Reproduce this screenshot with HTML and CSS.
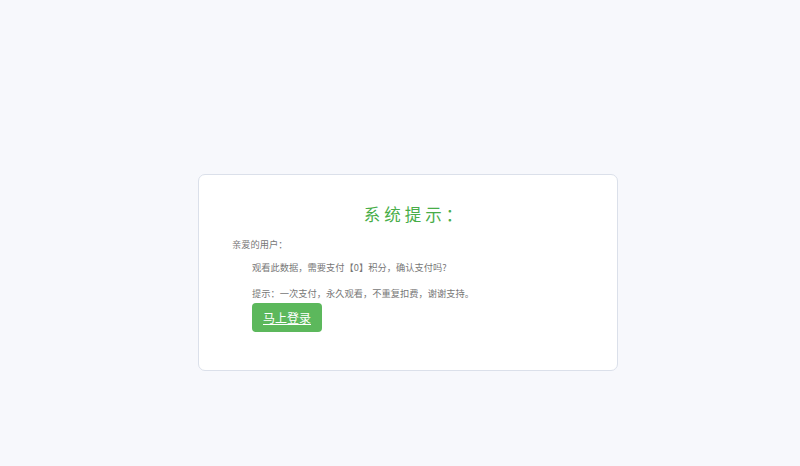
FILE: index.html
```html
<!DOCTYPE html>
<html lang="zh-CN">
<head>
<meta charset="utf-8">
<title>系统提示</title>
<link rel="stylesheet" href="styles.css">
</head>
<body>
<div class="page">
  <div class="card">
    <h1 class="title">系统提示：</h1>
    <p class="greet">亲爱的用户：</p>
    <div class="body">
      <p class="line first">观看此数据，需要支付【0】积分，确认支付吗?</p>
      <p class="line second">提示：一次支付，永久观看，不重复扣费，谢谢支持。</p>
      <a class="btn" href="#">马上登录</a>
    </div>
  </div>
</div>
</body>
</html>
```

FILE: styles.css
```css
html, body {
  margin: 0;
  padding: 0;
  background: #f7f8fc;
  font-family: "Noto Sans CJK SC", "Noto Sans", sans-serif;
}
.page {
  display: flex;
  justify-content: center;
  padding: 174px 0 0 16px;
  height: 466px;
  box-sizing: border-box;
}
.card {
  width: 420px;
  height: 197px;
  box-sizing: border-box;
  background: #ffffff;
  border: 1px solid #dbe0ea;
  border-radius: 7px;
  padding: 27px 33px 0 33px;
}
.title {
  margin: 0;
  font-size: 16.5px;
  line-height: 24px;
  font-weight: 400;
  color: #48ad48;
  letter-spacing: 4px;
  text-align: center;
  padding-left: 14px;
}
.greet {
  margin: 11px 0 0 0;
  font-size: 9.25px;
  line-height: 14px;
  color: #777777;
}
.body {
  padding-left: 20px;
}
.line {
  margin: 0;
  font-size: 9.25px;
  line-height: 14px;
  color: #777777;
}
.first { margin-top: 9px; }
.second { margin-top: 12px; }
.btn {
  display: inline-block;
  margin-top: 3px;
  width: 70px;
  height: 29px;
  box-sizing: border-box;
  background: #5cb85c;
  border-radius: 4px;
  color: #ffffff;
  font-size: 12px;
  line-height: 29px;
  text-align: center;
  text-decoration: underline;
}
```
